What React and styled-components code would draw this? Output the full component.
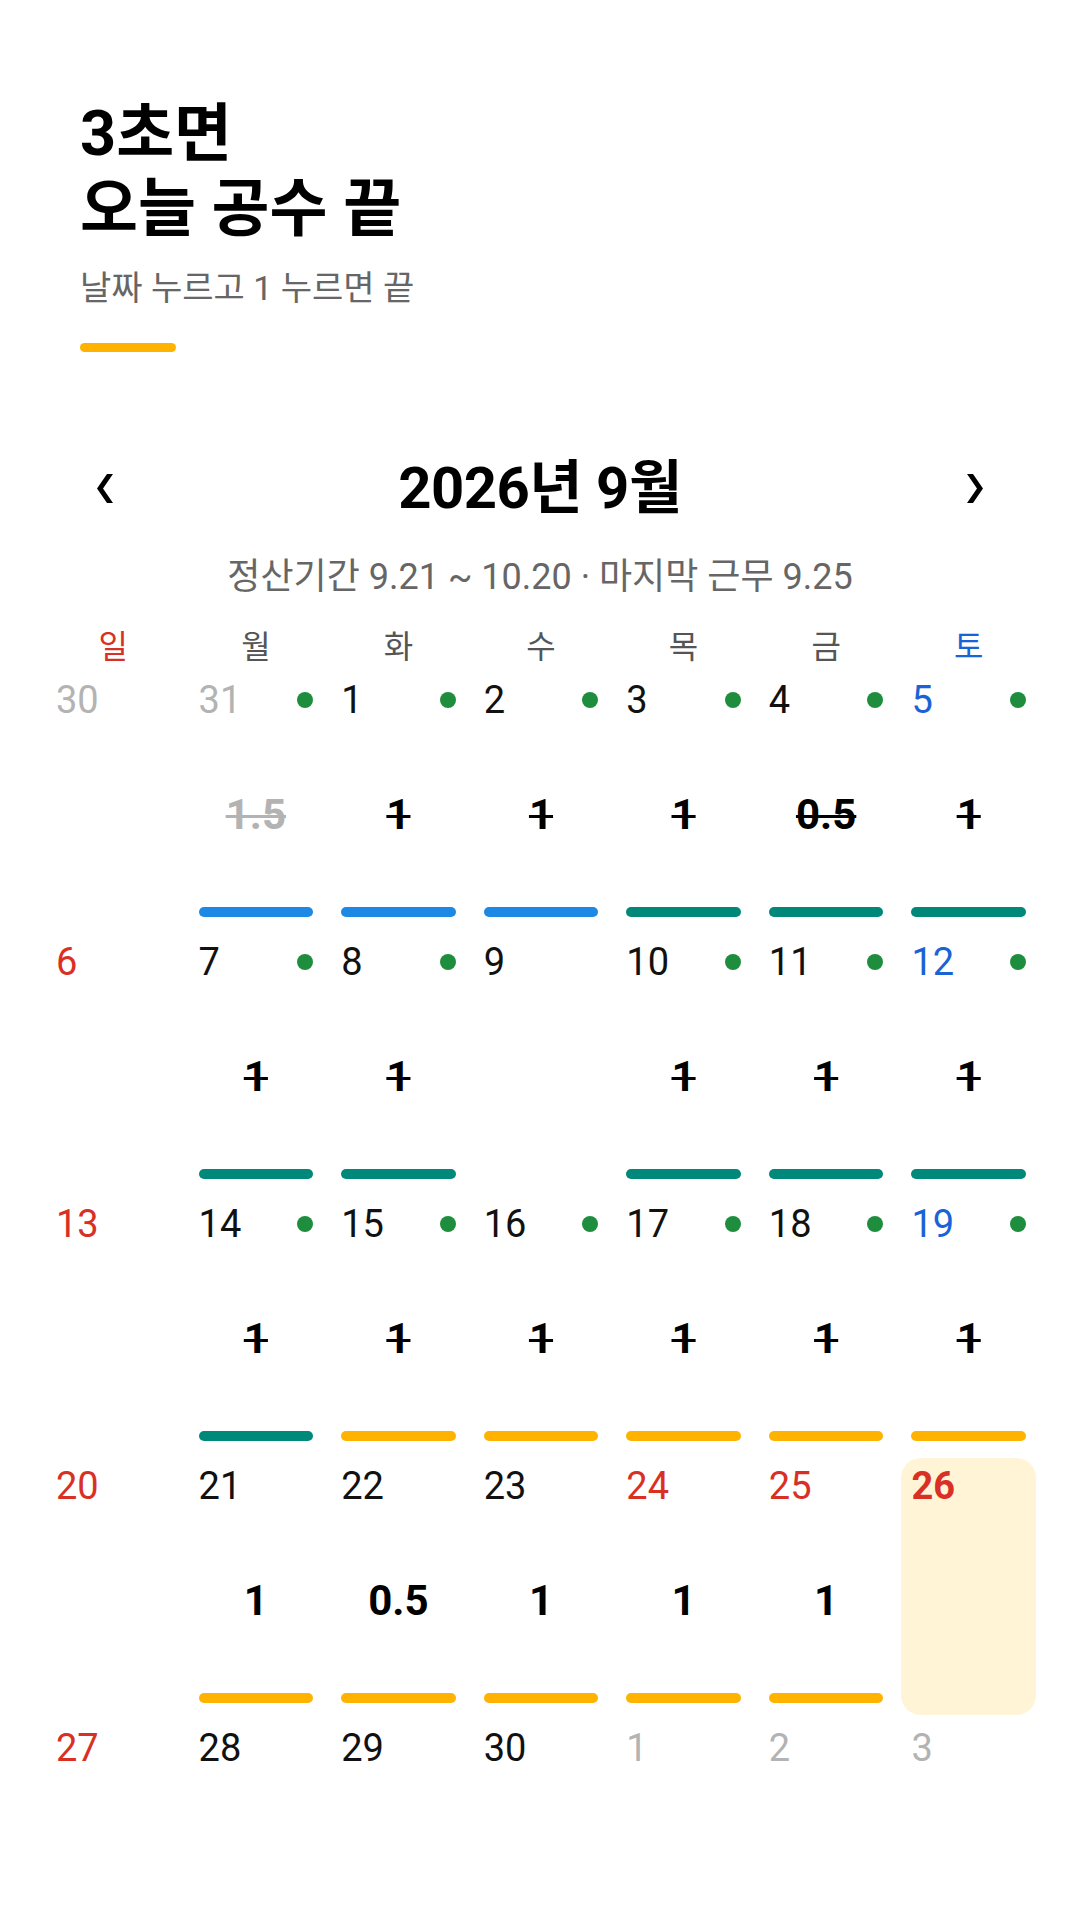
import React from 'react';
import styled, { createGlobalStyle } from 'styled-components';

const GlobalStyle = createGlobalStyle`
    html, body {
        margin: 0;
        padding: 0;
        background: #fff;
    }
    body {
        font-family: Roboto, "Noto Sans CJK KR", "Noto Sans", sans-serif;
        color: #000;
    }
`;

const Page = styled.div`
    width: 1080px;
    min-height: 1920px;
    background: #fff;
    padding-top: 96px;
    box-sizing: border-box;
`;

const Intro = styled.header`
    padding: 0 80px;
`;

const Title = styled.h1`
    margin: 0;
    font-size: 63px;
    line-height: 75px;
    font-weight: 700;
`;

const Lead = styled.p`
    margin: 21px 0 0;
    font-size: 34px;
    line-height: 42px;
    color: #666;
`;

const Accent = styled.div`
    width: 96px;
    height: 9px;
    border-radius: 5px;
    background: #ffb300;
    margin-top: 34px;
`;

const MonthBar = styled.div`
    display: flex;
    align-items: center;
    justify-content: space-between;
    padding: 0 97px;
    margin-top: 104px;
    height: 64px;
`;

const MonthTitle = styled.h2`
    margin: 0;
    font-size: 58px;
    line-height: 64px;
    font-weight: 700;
    letter-spacing: -0.5px;
`;

const NavButton = styled.button`
    border: 0;
    padding: 0;
    background: none;
    display: flex;
    cursor: pointer;
`;

const Period = styled.p`
    margin: 37px 0 0;
    text-align: center;
    font-size: 36px;
    line-height: 40px;
    color: #666;
`;

const Calendar = styled.section`
    padding: 0 44px 0 46px;
    margin-top: 26px;
`;

const Grid = styled.div`
    display: grid;
    grid-template-columns: repeat(7, 1fr);
    column-gap: 8px;
    row-gap: 5px;
`;

const dayColor = {
    default: '#111',
    muted: '#b3b3b3',
    red: '#d93025',
    blue: '#1a63d6',
    head: '#555',
};

const Weekday = styled.div`
    text-align: center;
    font-size: 32px;
    line-height: 40px;
    color: ${p => dayColor[p.$tone]};
    margin-top: 4px;
`;

const Cell = styled.div`
    height: 257px;
    box-sizing: border-box;
    padding: 10px 10px 12px;
    display: flex;
    flex-direction: column;
    border-radius: 20px;
    background: ${p => (p.$today ? '#fff4d6' : 'transparent')};
`;

const DateRow = styled.div`
    display: flex;
    align-items: center;
    justify-content: space-between;
    height: 36px;
`;

const DateNum = styled.span`
    font-size: 38px;
    line-height: 36px;
    font-weight: ${p => (p.$today ? 700 : 400)};
    color: ${p => dayColor[p.$tone]};
`;

const Dot = styled.span`
    width: 16px;
    height: 16px;
    border-radius: 50%;
    background: #1e8e3e;
`;

const Value = styled.div`
    margin-top: 76px;
    text-align: center;
    font-size: 42px;
    line-height: 42px;
    font-weight: 700;
    color: ${p => (p.$muted ? '#b3b3b3' : '#000')};
    text-decoration: ${p => (p.$struck ? 'line-through' : 'none')};
    text-decoration-thickness: 3px;
`;

const barColor = {
    blue: '#1e88e5',
    teal: '#00897b',
    amber: '#ffb300',
};

const Bar = styled.div`
    margin-top: auto;
    height: 10px;
    border-radius: 5px;
    background: ${p => barColor[p.$kind]};
`;

const Chevron = ({ dir }) => (
    <svg width="16" height="29" viewBox="0 0 16 29">
        <polygon
            fill="#000"
            points={dir === 'left'
                ? '10,0 16,0 6,14.5 16,29 10,29 0,14.5'
                : '0,0 6,0 16,14.5 6,29 0,29 10,14.5'}
        />
    </svg>
);

const weekdays = [
    ['일', 'red'], ['월', 'head'], ['화', 'head'], ['수', 'head'],
    ['목', 'head'], ['금', 'head'], ['토', 'blue'],
];

// d, tone, dot, value, struck, bar
const c = (d, tone = 'default', dot = false, value = null, struck = false, bar = null, extra = {}) =>
    ({ d, tone, dot, value, struck, bar, ...extra });

const weeks = [
    [
        c(30, 'muted'),
        c(31, 'muted', true, '1.5', true, 'blue', { mutedValue: true }),
        c(1, 'default', true, '1', true, 'blue'),
        c(2, 'default', true, '1', true, 'blue'),
        c(3, 'default', true, '1', true, 'teal'),
        c(4, 'default', true, '0.5', true, 'teal'),
        c(5, 'blue', true, '1', true, 'teal'),
    ],
    [
        c(6, 'red'),
        c(7, 'default', true, '1', true, 'teal'),
        c(8, 'default', true, '1', true, 'teal'),
        c(9),
        c(10, 'default', true, '1', true, 'teal'),
        c(11, 'default', true, '1', true, 'teal'),
        c(12, 'blue', true, '1', true, 'teal'),
    ],
    [
        c(13, 'red'),
        c(14, 'default', true, '1', true, 'teal'),
        c(15, 'default', true, '1', true, 'amber'),
        c(16, 'default', true, '1', true, 'amber'),
        c(17, 'default', true, '1', true, 'amber'),
        c(18, 'default', true, '1', true, 'amber'),
        c(19, 'blue', true, '1', true, 'amber'),
    ],
    [
        c(20, 'red'),
        c(21, 'default', false, '1', false, 'amber'),
        c(22, 'default', false, '0.5', false, 'amber'),
        c(23, 'default', false, '1', false, 'amber'),
        c(24, 'red', false, '1', false, 'amber'),
        c(25, 'red', false, '1', false, 'amber'),
        c(26, 'red', false, null, false, null, { today: true }),
    ],
    [
        c(27, 'red'),
        c(28),
        c(29),
        c(30),
        c(1, 'muted'),
        c(2, 'muted'),
        c(3, 'muted'),
    ],
];

export default function App() {
    return (
        <Page>
            <GlobalStyle />
            <Intro>
                <Title>3초면<br />오늘 공수 끝</Title>
                <Lead>날짜 누르고 1 누르면 끝</Lead>
                <Accent />
            </Intro>

            <MonthBar>
                <NavButton aria-label="이전 달"><Chevron dir="left" /></NavButton>
                <MonthTitle>2026년 9월</MonthTitle>
                <NavButton aria-label="다음 달"><Chevron dir="right" /></NavButton>
            </MonthBar>
            <Period>정산기간 9.21 ~ 10.20 · 마지막 근무 9.25</Period>

            <Calendar>
                <Grid>
                    {weekdays.map(([label, tone]) => (
                        <Weekday key={label} $tone={tone}>{label}</Weekday>
                    ))}
                    {weeks.flat().map((day, index) => (
                        <Cell key={index} $today={day.today}>
                            <DateRow>
                                <DateNum $tone={day.tone} $today={day.today}>{day.d}</DateNum>
                                {day.dot && <Dot />}
                            </DateRow>
                            {day.value && (
                                <Value $struck={day.struck} $muted={day.mutedValue}>{day.value}</Value>
                            )}
                            {day.bar && <Bar $kind={day.bar} />}
                        </Cell>
                    ))}
                </Grid>
            </Calendar>
        </Page>
    );
}
